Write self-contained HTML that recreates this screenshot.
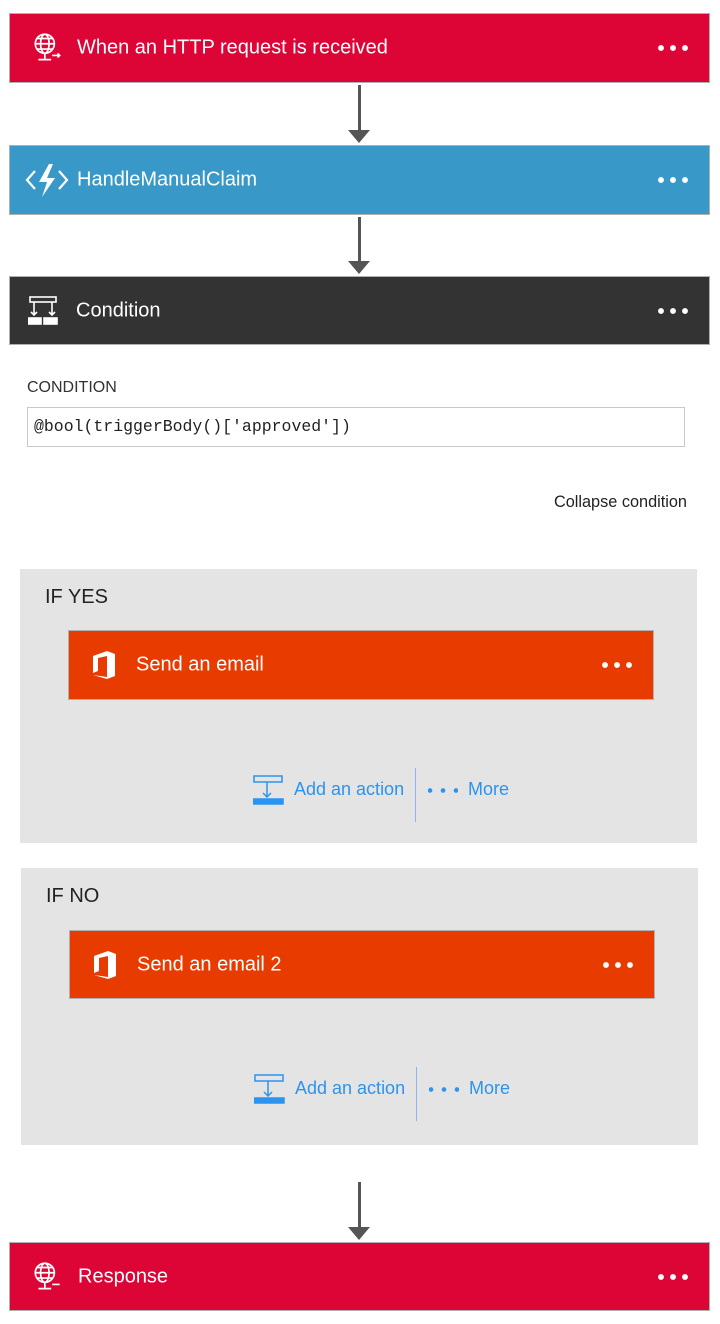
<!DOCTYPE html>
<html><head><meta charset="utf-8"><style>
body{margin:0;width:720px;height:1324px;background:#fff;position:relative;font-family:"Segoe UI","Liberation Sans",sans-serif;overflow:hidden}
.card{position:absolute;box-sizing:border-box;border:1px solid #b0b0b0;color:#fff;font-size:20px}
.card .t{position:absolute;top:50%;transform:translateY(-50%)}
.card .d{position:absolute;right:21px;top:50%;transform:translateY(-50%);width:30px;height:6px;background:radial-gradient(circle,#fff 2.6px,transparent 3.2px) -3px 0/12px 6px repeat-x}
.card svg{position:absolute;top:50%;transform:translateY(-50%)}
.arrow{position:absolute;left:358px;width:3px;background:#555}
.arrow::after{content:"";position:absolute;left:-10px;bottom:-12px;border-left:11px solid transparent;border-right:11px solid transparent;border-top:13px solid #555}
.panel{position:absolute;background:#e4e4e4}
.panel .h{position:absolute;left:25px;top:17px;font-size:20px;color:#222}
.add{position:absolute;color:#2b94f0;font-size:18px}
.bd{display:inline-block;width:30px;height:5px;vertical-align:middle;margin-right:10px;background:radial-gradient(circle,#2b94f0 2px,transparent 2.6px) -4.5px 0/13px 5px repeat-x}
</style></head><body>
<div class="card" style="left:9px;top:13px;width:701px;height:70px;background:#dc0535">
<svg style="left:20px" width="36" height="36" viewBox="0 0 34 34" fill="none" stroke="#fff" stroke-width="1.6"><circle cx="14" cy="13" r="9"/><ellipse cx="14" cy="13" rx="4" ry="9"/><path d="M5 13h18M7 8h14M7 18h14M14 22v6M8 28h12M21 24h7m-2-2 2 2-2 2"/></svg>
<span class="t" style="left:67px">When an HTTP request is received</span><span class="d"></span></div>
<div class="arrow" style="top:85px;height:46px"></div>
<div class="card" style="left:9px;top:145px;width:701px;height:70px;background:#3899c8">
<svg style="left:15px" width="44" height="36" viewBox="0 0 44 36"><path d="M10 9 2 18l8 9M34 9l8 9-8 9" stroke="#fff" stroke-width="2.2" fill="none"/><path d="M24 2 14 20h8l-5 15 13-19h-8l6-14z" fill="#fff"/></svg>
<span class="t" style="left:67px">HandleManualClaim</span><span class="d"></span></div>
<div class="arrow" style="top:217px;height:45px"></div>
<div class="card" style="left:9px;top:276px;width:701px;height:69px;background:#333">
<svg style="left:18px" width="30" height="30" viewBox="0 0 30 30" fill="none" stroke="#fff" stroke-width="1.6"><rect x="2" y="1" width="26" height="5"/><path d="M6 6v13m-3-3 3 3 3-3M24 6v13m-3-3 3 3 3-3"/><rect x="0" y="22" width="13" height="6" fill="#fff"/><rect x="16" y="22" width="13" height="6" fill="#fff"/></svg>
<span class="t" style="left:66px">Condition</span><span class="d"></span></div>
<div style="position:absolute;left:27px;top:379px;font-size:16px;color:#333">CONDITION</div>
<div style="position:absolute;left:27px;top:407px;width:658px;height:40px;box-sizing:border-box;border:1px solid #c8c8c8;font-family:'Liberation Mono',monospace;font-size:16.5px;padding:9px 0 0 6px;color:#222">@bool(triggerBody()['approved'])</div>
<div style="position:absolute;right:33px;top:493px;font-size:16.3px;color:#222">Collapse condition</div>

<div class="panel" style="left:20px;top:569px;width:677px;height:274px"><div class="h">IF YES</div></div>
<div class="card" style="left:68px;top:630px;width:586px;height:70px;background:#e83b00">
<svg style="left:22px" width="26" height="30" viewBox="0 0 26 30"><path d="M2 6 16 1l8 3v22l-8 3-14-4 14 2V6L7 8v13l-5 2z" fill="#fff"/></svg>
<span class="t" style="left:67px">Send an email</span><span class="d"></span></div>
<svg style="position:absolute;left:253px;top:775px" width="31" height="30" viewBox="0 0 31 30" fill="none" stroke="#2b94f0" stroke-width="1.5"><rect x="1" y="1" width="28" height="6"/><path d="M14 7v15m-4-4 4 4 4-4"/><rect x="0" y="24" width="30" height="5" fill="#2b94f0"/></svg>
<div class="add" style="left:294px;top:779px">Add an action</div>
<div style="position:absolute;left:415px;top:768px;width:1px;height:54px;background:#8fb4ee"></div>
<div class="add" style="left:428px;top:779px"><span class="bd"></span>More</div>

<div class="panel" style="left:21px;top:868px;width:677px;height:277px"><div class="h">IF NO</div></div>
<div class="card" style="left:69px;top:930px;width:586px;height:69px;background:#e83b00">
<svg style="left:22px" width="26" height="30" viewBox="0 0 26 30"><path d="M2 6 16 1l8 3v22l-8 3-14-4 14 2V6L7 8v13l-5 2z" fill="#fff"/></svg>
<span class="t" style="left:67px">Send an email 2</span><span class="d"></span></div>
<svg style="position:absolute;left:254px;top:1074px" width="31" height="30" viewBox="0 0 31 30" fill="none" stroke="#2b94f0" stroke-width="1.5"><rect x="1" y="1" width="28" height="6"/><path d="M14 7v15m-4-4 4 4 4-4"/><rect x="0" y="24" width="30" height="5" fill="#2b94f0"/></svg>
<div class="add" style="left:295px;top:1078px">Add an action</div>
<div style="position:absolute;left:416px;top:1067px;width:1px;height:54px;background:#8fb4ee"></div>
<div class="add" style="left:429px;top:1078px"><span class="bd"></span>More</div>

<div class="arrow" style="top:1182px;height:46px"></div>
<div class="card" style="left:9px;top:1242px;width:701px;height:69px;background:#dc0535">
<svg style="left:20px" width="36" height="36" viewBox="0 0 34 34" fill="none" stroke="#fff" stroke-width="1.6"><circle cx="14" cy="13" r="9"/><ellipse cx="14" cy="13" rx="4" ry="9"/><path d="M5 13h18M7 8h14M7 18h14M14 22v6M8 28h12M21 24h7"/></svg>
<span class="t" style="left:68px">Response</span><span class="d"></span></div>
</body></html>
